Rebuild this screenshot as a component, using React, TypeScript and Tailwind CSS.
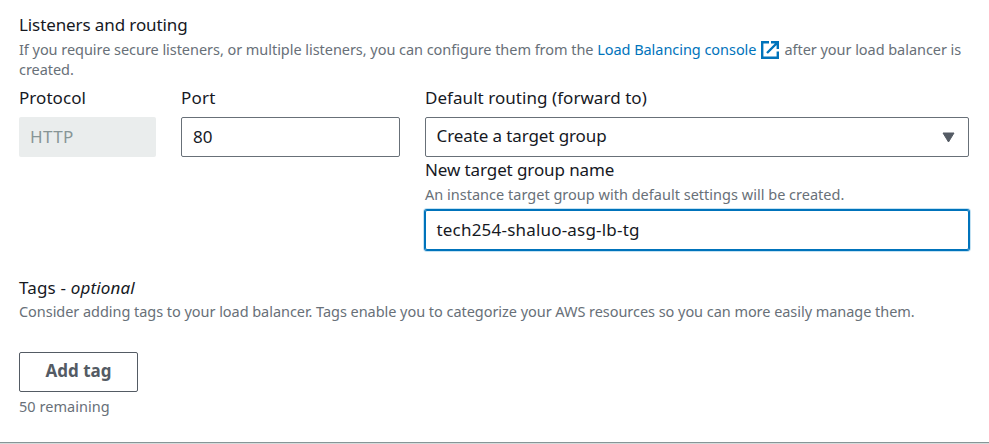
import type { ReactNode } from "react";

function Label({ children, tracking = "tracking-[-0.1px]" }: { children: ReactNode; tracking?: string }) {
  return (
    <div className={`h-6 text-[17px] leading-6 whitespace-nowrap text-[#16191f] ${tracking}`}>
      {children}
    </div>
  );
}

function Hint({ children, tracking = "tracking-[-0.046px]" }: { children: ReactNode; tracking?: string }) {
  return (
    <p className={`text-[14.5px] leading-5 whitespace-nowrap text-[#687078] ${tracking}`}>
      {children}
    </p>
  );
}

function ExternalIcon() {
  return (
    <svg
      viewBox="0 0 18 18"
      className="mr-[5px] ml-[5px] inline-block h-[18px] w-[18px] align-[-4px]"
      fill="none"
      stroke="#0073bb"
      strokeWidth="2.4"
    >
      <path d="M8 1.2H1.2v15.6h15.6v-6.3" />
      <path d="M10 1.2h6.8v6.8M16.5 1.5L6 12" />
    </svg>
  );
}

export default function App() {
  return (
    <main className="flex h-[444px] w-[989px] flex-col overflow-hidden bg-white font-['Noto_Sans',sans-serif] text-[#16191f]">
      <div className="flex flex-1 flex-col pt-[13px] pl-[19px]">
        <Label>Listeners and routing</Label>
        <div className="pt-[2px]">
          <Hint>
            If you require secure listeners, or multiple listeners, you can configure them from the{" "}
            <a className="text-[#0073bb]">Load Balancing console</a>
            <ExternalIcon />
            after your load balancer is
            <br />
            created.
          </Hint>
        </div>

        <div className="flex pt-[7px]">
          <div className="mr-[25px] w-[137px]">
            <Label tracking="tracking-[0.05px]">Protocol</Label>
            <div className="mt-[7px] flex h-10 items-center rounded-[2px] bg-[#eaeded] pl-[11px] text-[17px] tracking-[0.4px] text-[#879596]">
              HTTP
            </div>
          </div>
          <div className="mr-[25px] w-[219px]">
            <Label tracking="tracking-[0.25px]">Port</Label>
            <div className="mt-[7px] flex h-10 items-center rounded-[2px] border border-[#687078] pl-[11px] text-[17px]">
              80
            </div>
          </div>
          <div className="w-[544px]">
            <Label tracking="tracking-[0.05px]">Default routing (forward to)</Label>
            <div className="mt-[7px] flex h-10 items-center justify-between rounded-[2px] border border-[#687078] pr-[13px] pl-[10.5px] text-[17px] tracking-[-0.1px]">
              <span className="pb-[2px]">Create a target group</span>
              <svg viewBox="0 0 13 11" className="h-[11px] w-[13px]" fill="#545b64" stroke="#545b64">
                <path d="M1 1h11L6.5 10z" strokeLinejoin="round" />
              </svg>
            </div>
            <div className="pt-[1px]">
              <Label>New target group name</Label>
            </div>
            <div className="pt-[2px]">
              <Hint tracking="tracking-[0.012px]">
                An instance target group with default settings will be created.
              </Hint>
            </div>
            <div className="mt-[6px] flex h-10 items-center rounded-[2px] border border-[#0073bb] pl-[10.5px] text-[17px] tracking-[0.2px] shadow-[0_0_0_1px_#0073bb,0_0_0_2px_#c4e2f3]">
              tech254-shaluo-asg-lb-tg
            </div>
          </div>
        </div>

        <div className="pt-[26px]">
          <Label tracking="tracking-[0.16px]">
            Tags - <i>optional</i>
          </Label>
        </div>
        <div className="pt-[1px]">
          <Hint>
            Consider adding tags to your load balancer. Tags enable you to categorize your AWS resources so you can more easily manage them.
          </Hint>
        </div>
        <button className="mt-[31px] h-10 w-[119px] rounded-[2px] border border-[#545b64] pb-[2px] text-[17px] font-bold text-[#545b64]">
          Add tag
        </button>
        <div className="pt-[4px]">
          <Hint tracking="tracking-[0.03px]">50 remaining</Hint>
        </div>
      </div>
      <div className="h-[2px] shrink-0 border-t border-[#879596] bg-[#d5dbdb]" />
    </main>
  );
}
